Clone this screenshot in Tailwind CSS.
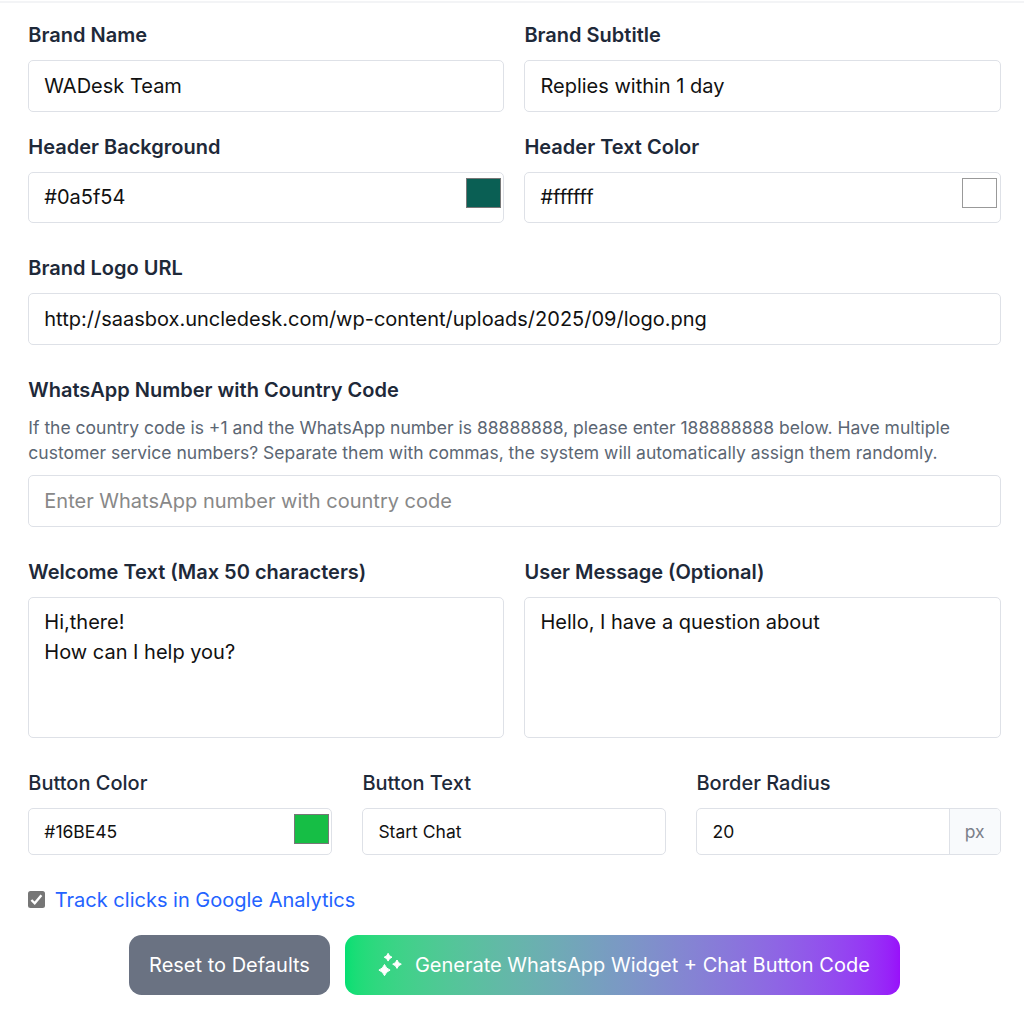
<!DOCTYPE html>
<html lang="en">

<head>
    <meta charset="UTF-8">
    <meta name="viewport" content="width=device-width, initial-scale=1.0">
    <script src="https://cdn.jsdelivr.net/npm/@tailwindcss/browser@4"></script>
    <title>WhatsApp Widget Generator</title>
</head>

<body class="bg-white font-['Inter','Noto_Sans',sans-serif] text-xl/[30px] text-[#111]">
    <form class="mt-px border-t-2 border-gray-100 pt-[16.8px] pl-[28.3px] pr-[23.45px]">
        <div class="grid grid-cols-2 gap-5">
            <div>
                <label for="brandName" class="block mb-2.5 font-semibold text-gray-800">Brand Name</label>
                <input id="brandName" type="text" value="WADesk Team" class="block w-full h-[51.8px] px-[15px] border border-[#dee1e7] rounded-[5px]">
            </div>
            <div>
                <label for="brandSubtitle" class="block mb-2.5 font-semibold text-gray-800">Brand Subtitle</label>
                <input id="brandSubtitle" type="text" value="Replies within 1 day" class="block w-full h-[51.8px] px-[15px] border border-[#dee1e7] rounded-[5px]">
            </div>
            <div>
                <label for="headerBg" class="block mb-2.5 font-semibold text-gray-800">Header Background</label>
                <div class="relative">
                    <input id="headerBg" type="text" value="#0a5f54" class="block w-full h-[51.5px] px-[15px] border border-[#dee1e7] rounded-[5px]">
                    <span class="absolute right-[3px] top-1.5 w-[35px] h-[30px] border border-[#777] bg-[#0a5f54]"></span>
                </div>
            </div>
            <div>
                <label for="headerText" class="block mb-2.5 font-semibold text-gray-800">Header Text Color</label>
                <div class="relative">
                    <input id="headerText" type="text" value="#ffffff" class="block w-full h-[51.5px] px-[15px] border border-[#dee1e7] rounded-[5px]">
                    <span class="absolute right-[3.2px] top-1.5 w-[35px] h-[30px] border border-[#999] bg-white"></span>
                </div>
            </div>
        </div>

        <div class="mt-[30px]">
            <label for="logoUrl" class="block mb-2.5 font-semibold text-gray-800">Brand Logo URL</label>
            <input id="logoUrl" type="text" value="http://saasbox.uncledesk.com/wp-content/uploads/2025/09/logo.png" class="block w-full h-[51.6px] px-[15px] border border-[#dee1e7] rounded-[5px]">
        </div>

        <div class="mt-[30px]">
            <label for="number" class="block mb-2.5 font-semibold text-gray-800">WhatsApp Number with Country Code</label>
            <p class="mb-2.5 text-[17.5px]/[25px] text-[#5b6673]">If the country code is +1 and the WhatsApp number is 88888888, please enter 188888888 below. Have multiple<br>customer service numbers? Separate them with commas, the system will automatically assign them randomly.</p>
            <input id="number" type="text" placeholder="Enter WhatsApp number with country code" class="block w-full h-[52px] px-[15px] border border-[#dee1e7] rounded-[5px] placeholder:text-[#888]">
        </div>

        <div class="mt-[30px] grid grid-cols-2 gap-5">
            <div>
                <label for="welcome" class="block mb-2.5 font-semibold text-gray-800">Welcome Text (Max 50 characters)</label>
                <textarea id="welcome" class="block w-full h-[141.6px] px-[15px] pt-[9.3px] pb-2.5 border border-[#dee1e7] rounded-[5px] resize-none">Hi,there!
How can I help you?</textarea>
            </div>
            <div>
                <label for="message" class="block mb-2.5 font-semibold text-gray-800">User Message (Optional)</label>
                <textarea id="message" class="block w-full h-[141.6px] px-[15px] pt-[9.3px] pb-2.5 border border-[#dee1e7] rounded-[5px] resize-none">Hello, I have a question about</textarea>
            </div>
        </div>

        <div class="mt-[30px] grid grid-cols-3 gap-[30px]">
            <div>
                <label for="btnColor" class="block mb-2.5 font-medium text-gray-800">Button Color</label>
                <div class="relative">
                    <input id="btnColor" type="text" value="#16BE45" class="block w-full h-[46.5px] px-[15px] border border-[#dee1e7] rounded-[5px] text-[17.5px]">
                    <span class="absolute right-[3px] top-1.5 w-[35px] h-[30px] border border-[#777] bg-[#16be45]"></span>
                </div>
            </div>
            <div>
                <label for="btnText" class="block mb-2.5 font-medium text-gray-800">Button Text</label>
                <input id="btnText" type="text" value="Start Chat" class="block w-full h-[46.5px] px-[15px] border border-[#dee1e7] rounded-[5px] text-[17.5px]">
            </div>
            <div>
                <label for="radius" class="block mb-2.5 font-medium text-gray-800">Border Radius</label>
                <div class="flex h-[46.5px] border border-[#dee1e7] rounded-[5px] overflow-hidden text-[17.5px]">
                    <input id="radius" type="text" value="20" class="flex-1 min-w-0 px-[15px] pt-px">
                    <span class="flex items-center px-[15px] pt-px border-l border-[#dee1e7] bg-slate-50 text-[#7b808a]">px</span>
                </div>
            </div>
        </div>

        <label class="mt-[30px] flex items-center text-[#2463ff]">
            <input type="checkbox" checked class="peer sr-only">
            <svg class="mr-[9.5px] size-[17px]" viewBox="0 0 17 17" fill="none">
                <rect width="17" height="17" rx="2.5" fill="#767676" />
                <path d="M3.4 9l3.3 3.3L13.4 4.2" stroke="#fff" stroke-width="2.4" />
            </svg>
            Track clicks in Google Analytics
        </label>

        <div class="mt-5 flex justify-center gap-[15px]">
            <button type="button" class="h-[60px] px-5 rounded-[12.5px] bg-gray-500 text-white">Reset to Defaults</button>
            <button type="button" class="flex items-center h-[60px] px-[30px] rounded-[12.5px] bg-linear-to-r from-green-400 to-purple-600 text-white">
                <svg class="mr-2.5 w-[30px] h-[30px]" viewBox="0 0 30 30" fill="#fff" stroke="#fff" stroke-width="1" stroke-linejoin="round">
                    <path d="M13.1 3.3Q14 6.3 17 7.2Q14 8.1 13.1 11.1Q12.2 8.1 9.2 7.2Q12.2 6.3 13.1 3.3Z" />
                    <path d="M22 10Q23 13.2 26.3 14.2Q23 15.2 22 18.4Q21 15.2 17.7 14.2Q21 13.2 22 10Z" />
                    <path d="M9.5 14.5Q11 18.6 15.1 20.1Q11 21.6 9.5 25.7Q8 21.6 3.9 20.1Q8 18.6 9.5 14.5Z" />
                </svg>
                Generate WhatsApp Widget + Chat Button Code
            </button>
        </div>
    </form>
</body>

</html>
